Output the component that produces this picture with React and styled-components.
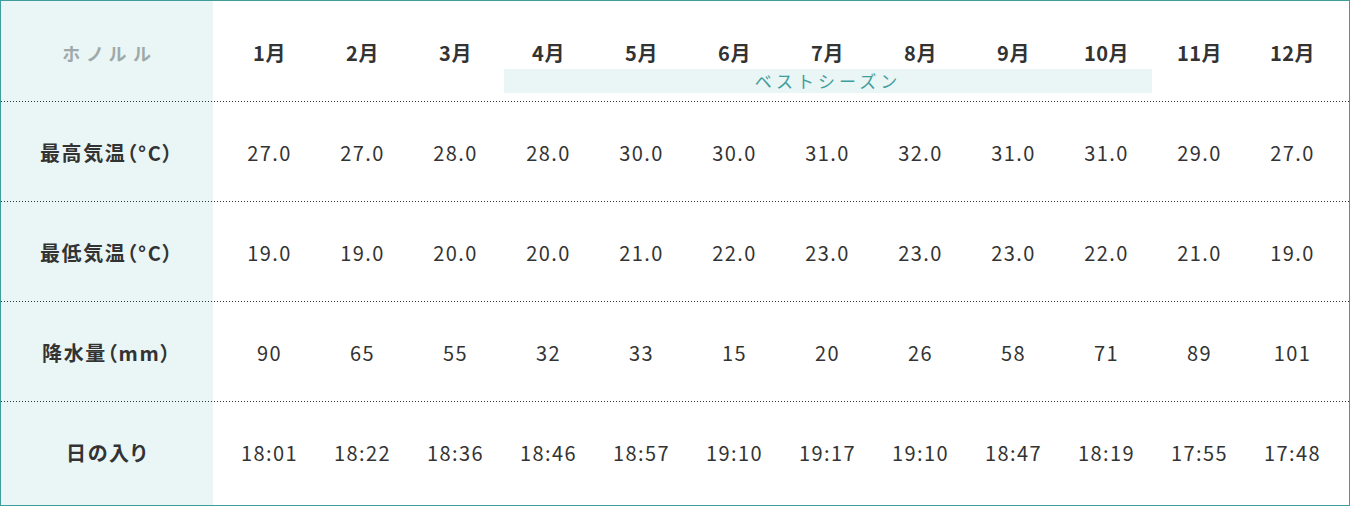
import React from 'react';
import styled, { createGlobalStyle } from 'styled-components';

const GlobalStyle = createGlobalStyle`
  html, body {
    margin: 0;
    padding: 0;
    background: #fff;
  }
  body {
    font-family: "Noto Sans CJK JP", "Noto Sans", sans-serif;
    color: #333;
  }
`

const LEFT = '212px'
const TINT = '#eaf6f6'

const Table = styled.div`
  box-sizing: border-box;
  width: 1350px;
  height: 506px;
  border: 1px solid #3f9e9c;
  display: flex;
  flex-direction: column;
`

const Row = styled.div`
  display: grid;
  grid-template-columns: ${LEFT} 1fr;
  box-sizing: border-box;
  height: ${(p) => (p.last ? '104px' : '100px')};
  padding-top: ${(p) => (p.header ? '0' : '1px')};
  background:
    ${(p) => (p.header ? '' : 'linear-gradient(to right, #333 1px, transparent 1px) 3px 0 / 3px 1px repeat-x,')}
    linear-gradient(to right, ${TINT} ${LEFT}, #fff ${LEFT});
`

const LabelCell = styled.div`
  display: flex;
  justify-content: center;
  align-items: ${(p) => (p.header ? 'flex-start' : 'center')};
  padding-top: ${(p) => (p.header ? '40px' : '2px')};
  padding-bottom: ${(p) => (p.last ? '4px' : '0')};
  padding-left: ${(p) => (p.header ? '6px' : '0')};
  font-size: ${(p) => (p.header ? '18px' : '20px')};
  line-height: 24px;
  font-weight: 700;
  font-feature-settings: "palt";
  letter-spacing: ${(p) => (p.header ? '7px' : '1.6px')};
  color: ${(p) => (p.header ? '#a0a9a9' : '#333')};
`

const Values = styled.div`
  display: grid;
  grid-template-columns: repeat(12, 1fr);
  padding: 0 10px;
  padding-bottom: ${(p) => (p.last ? '4px' : '0')};
`

const HeaderGrid = styled.div`
  display: grid;
  grid-template-columns: repeat(12, 1fr);
  grid-template-rows: 24px 24px;
  row-gap: 4px;
  padding: 40px 10px 0;
`

const Month = styled.div`
  text-align: center;
  font-size: 20px;
  line-height: 24px;
  font-weight: 700;
  color: #333;
  letter-spacing: 0.5px;
`

const SeasonBar = styled.div`
  grid-row: 2;
  grid-column: ${(p) => p.from} / ${(p) => p.to};
  background: ${TINT};
  color: #3f9e9c;
  font-size: 17px;
  line-height: 24px;
  letter-spacing: 4px;
  text-align: center;
  margin: 0 1px 0 2px;
`

const Value = styled.div`
  display: flex;
  align-items: center;
  justify-content: center;
  padding-top: 1px;
  font-size: 20px;
  letter-spacing: 1.4px;
  color: #333;
`

const months = ['1月', '2月', '3月', '4月', '5月', '6月', '7月', '8月', '9月', '10月', '11月', '12月']

const rows = [
  { label: '最高気温（°C）', values: ['27.0', '27.0', '28.0', '28.0', '30.0', '30.0', '31.0', '32.0', '31.0', '31.0', '29.0', '27.0'] },
  { label: '最低気温（°C）', values: ['19.0', '19.0', '20.0', '20.0', '21.0', '22.0', '23.0', '23.0', '23.0', '22.0', '21.0', '19.0'] },
  { label: '降水量（mm）', values: ['90', '65', '55', '32', '33', '15', '20', '26', '58', '71', '89', '101'] },
  { label: '日の入り', values: ['18:01', '18:22', '18:36', '18:46', '18:57', '19:10', '19:17', '19:10', '18:47', '18:19', '17:55', '17:48'] },
]

const App = () => {
  return (
    <>
      <GlobalStyle />
      <Table>
        <Row header>
          <LabelCell header>ホノルル</LabelCell>
          <HeaderGrid>
            {months.map((m) => (
              <Month key={m}>{m}</Month>
            ))}
            <SeasonBar from={4} to={11}>ベストシーズン</SeasonBar>
          </HeaderGrid>
        </Row>
        {rows.map((row, i) => {
          const last = i === rows.length - 1
          return (
            <Row key={row.label} last={last}>
              <LabelCell last={last}>{row.label}</LabelCell>
              <Values last={last}>
                {row.values.map((v, j) => (
                  <Value key={j}>{v}</Value>
                ))}
              </Values>
            </Row>
          )
        })}
      </Table>
    </>
  )
}

export default App
